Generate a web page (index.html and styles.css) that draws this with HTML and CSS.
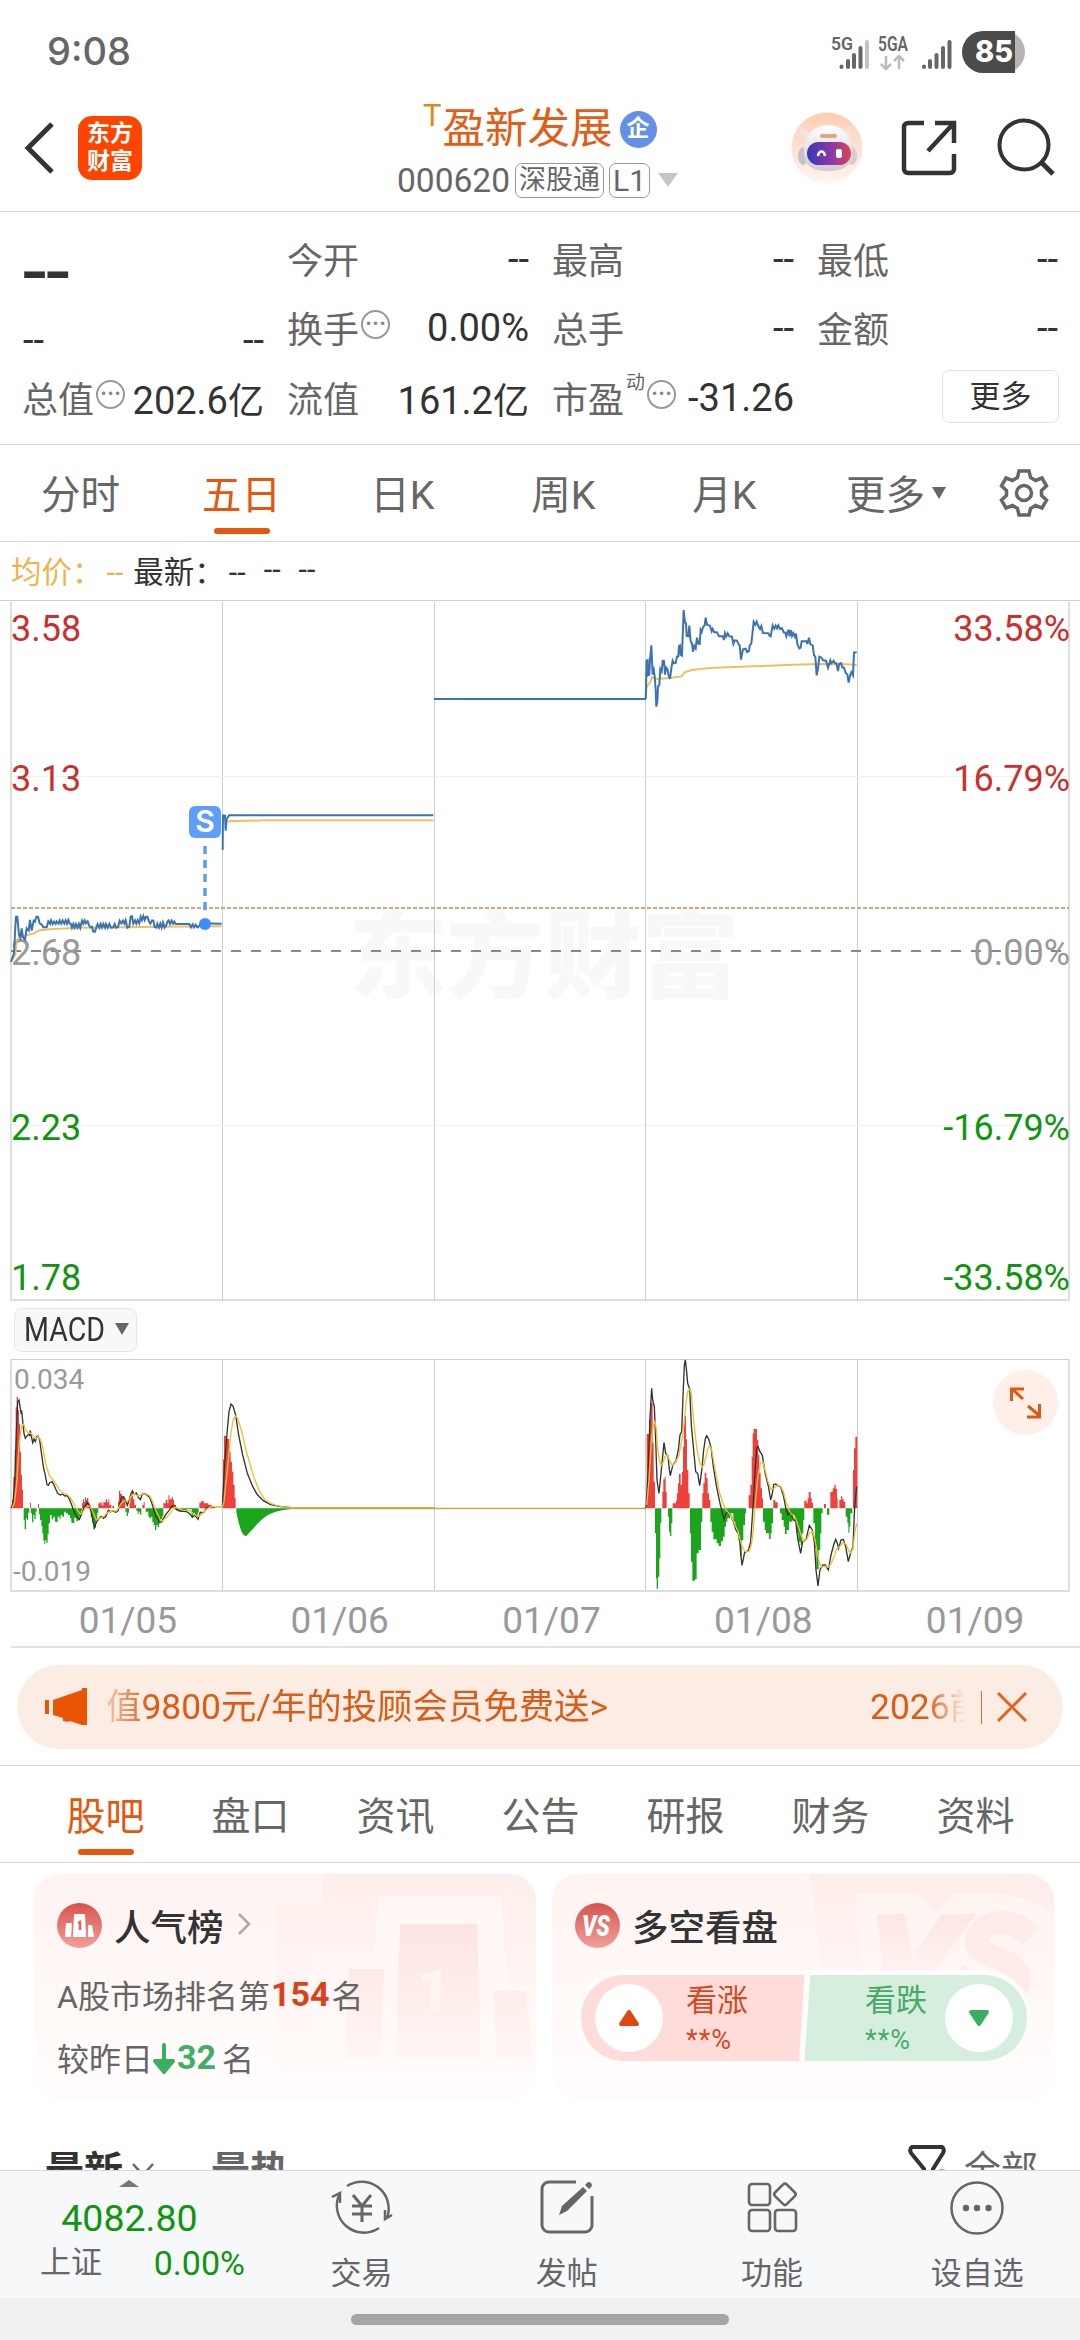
FILE: index.html
```html
<!DOCTYPE html>
<html lang="zh-CN">
<head>
  <meta charset="UTF-8">
  <meta name="viewport" content="width=device-width, initial-scale=1">
  <title>盈新发展 000620</title>
  <link rel="stylesheet" href="styles.css">
</head>
<body>
  <!-- Status bar -->
  <div class="status">
    <span class="clock">9:08</span>
    <svg class="signals" width="260" height="50" viewBox="0 0 260 50">
      <g fill="#666" font-family="Roboto" font-weight="600">
        <text x="0" y="20" font-size="18" textLength="22" lengthAdjust="spacingAndGlyphs">5G</text>
        <text x="47" y="21" font-size="20" textLength="30" lengthAdjust="spacingAndGlyphs">5GA</text>
      </g>
      <g stroke="#666" stroke-width="4" stroke-linecap="round">
        <path d="M10.500 37v-.5M17 37v-6M23 37V25M29.500 37V18"/>
        <path d="M36 37V12" stroke="#c4c4c4"/>
        <path d="M93 37v-.5M99 37v-6M105.500 37V25M112 37V18M118.500 37V12"/>
      </g>
      <path d="M55 26v13M50 34l5 5 5-5M68 39V26M63 31l5-5 5 5" fill="none" stroke="#bbb" stroke-width="2.500"/>
      <path d="M152 1h21a21 21 0 0 1 0 42h-21z" fill="#b5b5b5"/>
      <path d="M152 1h32v42h-32a21 21 0 0 1 0-42z" fill="#4b4b4b"/>
      <text x="144" y="32" font-family="Inter" font-size="30" font-weight="800" fill="#fff" textLength="38" lengthAdjust="spacingAndGlyphs">85</text>
    </svg>
  </div>

  <!-- Header -->
  <header class="header">
    <svg class="back" width="34" height="56" viewBox="0 0 34 56"><path d="M29 4L5 28l24 24" fill="none" stroke="#333" stroke-width="5"/></svg>
    <div class="logo"><span>东方</span><span>财富</span></div>
    <div class="title">
      <div class="name"><sup>T</sup>盈新发展<i class="badge">企</i></div>
      <div class="code">000620<b class="box">深股通</b><b class="box">L1</b><i class="tri light"></i></div>
    </div>
    <div class="actions">
      <svg width="72" height="72" viewBox="0 0 72 72">
        <defs>
          <linearGradient id="halo" x2="0" y2="1"><stop stop-color="#ffcdb2"/><stop offset="1" stop-color="#fff5f0"/></linearGradient>
          <linearGradient id="visor"><stop stop-color="#3a35b8"/><stop offset=".55" stop-color="#8a3aa5"/><stop offset="1" stop-color="#dd4458"/></linearGradient>
          <linearGradient id="shell" x2="0" y2="1"><stop stop-color="#fff"/><stop offset="1" stop-color="#cfcbd0"/></linearGradient>
        </defs>
        <circle cx="36" cy="36" r="35.500" fill="url(#halo)"/>
        <path d="M9 14c-1 9 4 14 10 14l5-8c-8 0-12-2-15-6zM60 14c1 9-3 14-8 14l-6-8c8 0 11-2 14-6z" fill="#f3e3e0"/>
        <ellipse cx="12" cy="44" rx="5" ry="9" fill="#c6c2c8"/><ellipse cx="61" cy="44" rx="5" ry="9" fill="#d2ced2"/>
        <path d="M13 40c0-15 9-27 24-27s24 12 24 27c0 14-8 19-24 19s-24-5-24-19z" fill="url(#shell)"/>
        <rect x="29" y="22" width="17" height="4" rx="2" fill="#dda978"/>
        <rect x="16" y="30" width="44" height="23" rx="11.500" fill="url(#visor)"/>
        <path d="M27 44c1-6 6-6 7 0" fill="none" stroke="#fff" stroke-width="2.500"/>
        <rect x="45" y="37" width="6" height="9" rx="2" fill="#fff"/>
      </svg>
      <svg class="share" width="60" height="60" viewBox="0 0 60 60"><path d="M24 5H8a4 4 0 0 0-4 4v42a4 4 0 0 0 4 4h42a4 4 0 0 0 4-4V36M35 5h19v20M53 6L28 33" fill="none" stroke="#333" stroke-width="4.500"/></svg>
      <svg width="60" height="60" viewBox="0 0 60 60"><g fill="none" stroke="#333" stroke-width="4"><circle cx="28" cy="27" r="24.500"/><path d="M45 44l12 12" stroke-width="5"/></g></svg>
    </div>
  </header>

  <!-- Quote figures -->
  <section class="quote">
    <div class="cell"><b class="price">--</b></div>
    <div class="cell"><span>今开</span><em>--</em></div>
    <div class="cell"><span>最高</span><em>--</em></div>
    <div class="cell"><span>最低</span><em>--</em></div>

    <div class="cell low"><em>--</em><em>--</em></div>
    <div class="cell"><span>换手<i class="info">•••</i></span><em>0.00%</em></div>
    <div class="cell"><span>总手</span><em>--</em></div>
    <div class="cell"><span>金额</span><em>--</em></div>

    <div class="cell"><span>总值<i class="info">•••</i></span><em>202.6<u>亿</u></em></div>
    <div class="cell"><span>流值</span><em>161.2<u>亿</u></em></div>
    <div class="cell"><span>市盈<sup>动</sup><i class="info">•••</i></span><em>-31.26</em></div>
    <div class="cell"><button class="more">更多</button></div>
  </section>

  <!-- Period tabs -->
  <nav class="periods">
    <span>分时</span><span class="on">五日</span><span>日K</span><span>周K</span><span>月K</span><span>更多<i class="tri"></i></span>
    <svg width="50" height="50" viewBox="0 0 50 50"><path d="M20 3h10l1.500 6.500 5 3 6.500-2.500 4.500 8-5 4.500v5l5 4.500-4.500 8-6.500-2.500-5 3L30 47H20l-1.500-6.500-5-3L7 40l-4.500-8 5-4.500v-5L2.500 18 7 10l6.500 2.500 5-3z" fill="none" stroke="#666" stroke-width="3.500"/><circle cx="25" cy="25" r="7.500" fill="none" stroke="#666" stroke-width="3.500"/></svg>
  </nav>

  <div class="legend"><span class="avg">均价：<i>--</i></span><span>最新：<i>--</i></span><span class="gap">--</span><span class="gap">--</span></div>

  <!-- Five day price chart -->
  <svg class="chart" width="1080" height="701" viewBox="0 0 1080 701">
    <text class="mark" x="349" y="390" textLength="390" lengthAdjust="spacingAndGlyphs">东方财富</text>
    <g class="grid">
      <path d="M0 .5H1080"/>
      <path class="thick" d="M11 2V700H1069V2M11 700H1069"/>
      <path d="M222.500 2V700M434.500 2V700M645.500 2V700M857.500 2V700"/>
      <path class="faint" d="M11 176.500H1069M11 525.500H1069"/>
    </g>
    <path d="M11 351H1069" stroke="#888" stroke-width="2" stroke-dasharray="10 10"/>
    <path d="M11 308H1069" stroke="#d0a58a" stroke-width="2" stroke-dasharray="4 2"/>
    <g class="axis">
      <text class="up" x="11" y="41">3.58</text><text class="up" x="11" y="191">3.13</text>
      <text class="flat" x="11" y="365">2.68</text>
      <text class="down" x="11" y="540">2.23</text><text class="down" x="11" y="690">1.78</text>
      <g text-anchor="end">
        <text class="up" x="1070" y="41">33.58%</text><text class="up" x="1070" y="191">16.79%</text>
        <text class="flat" x="1070" y="365">0.00%</text>
        <text class="down" x="1070" y="540">-16.79%</text><text class="down" x="1070" y="690">-33.58%</text>
      </g>
    </g>
    <g transform="translate(0 180) scale(.33333)" class="line">
      <path class="avgline" d="M36 540L46 525 50 480 60 472 82 465 100 461 118 451 160 447 240 443 380 442 480 440 665 439M684 124L800 121H1300"/>
      <path d="M33 546L42 520 46 440 48 410 52 410 57 465 61 473 65 445 69 472 75 478 80 445 86 452 90 420 95 452 101 422 105 425 109 410 114 410 119 430 126 435 130 442 140 442 145 424 150 431 153 421 158 432 162 425 167 432 170 424 176 431 179 421 184 431 188 421 193 431 197 421 201 431 205 420 209 431 213 432 216 443 220 432 224 443 228 432 233 443 237 432 241 443 246 422 250 431 254 421 258 430 263 424 268 438 272 442 276 440 280 455 285 455 289 442 293 432 298 443 302 432 306 443 310 432 315 443 318 432 323 443 328 432 333 443 340 442 344 432 348 443 354 441 359 422 364 430 369 422 373 431 377 421 382 443 388 440 392 410 396 409 400 431 405 421 409 431 413 420 418 430 422 410 426 420 430 408 434 420 438 410 442 410 446 422 451 431 456 421 460 422 464 441 469 443 472 431 477 443 481 431 485 443 489 427 494 443 498 438 502 425 506 421 510 432 515 422 519 431 523 425 527 432 568 432 573 442 578 433 582 442 587 434 592 442 598 438 602 430 665 431M668 210L669 106 675 107 677 152 680 118 687 106H1300"/>
    </g>
    <path class="blue" d="M434 99H646"/>
    <g transform="translate(620 -10) scale(.33333)" class="line">
      <path class="avgline" d="M78 325L79 295 84 284 91 277 95 262 110 267 150 264 185 259 195 246 215 240 270 234 400 229 520 224 600 222 680 223 710 225"/>
      <path d="M77 327L80 212 83 210 84 256 88 254 90 210 94 166 98 254 100 230 104 258 107 300 109 350 112 335 114 290 118 285 121 237 125 244 128 212 132 213 135 254 138 232 142 236 146 257 150 267 154 235 158 212 162 220 167 219 171 200 175 199 177 168 180 166 182 194 186 197 191 60 195 98 198 100 200 138 205 139 208 107 212 154 216 160 219 185 223 168 227 175 231 143 235 161 239 162 242 120 245 126 249 112 254 106 257 83 261 104 270 107 275 124 278 117 283 127 291 127 297 139 308 139 312 150 315 129 319 139 323 130 328 139 336 140 340 162 344 151 351 152 355 162 359 166 363 209 369 178 377 176 381 186 387 183 389 167 394 160 398 125 401 95 406 104 410 95 414 106 420 117 424 108 429 129 445 130 449 138 452 139 458 106 463 116 467 107 471 115 475 106 480 117 486 115 491 127 496 128 499 139 505 119 509 139 512 120 516 138 520 129 525 140 528 131 532 162 538 175 542 173 545 154 560 154 562 162 567 143 571 163 578 166 582 196 586 200 590 256 594 236 598 200 605 203 609 211 618 212 624 233 631 211 634 220 641 212 645 220 649 220 654 243 658 221 663 219 667 232 672 233 677 249 682 253 686 278 690 257 694 247 699 256 702 188 710 187"/>
    </g>
    <g>
      <path d="M205 246V310" stroke="#5e9cf0" stroke-width="3.500" stroke-dasharray="8 6"/>
      <circle cx="205" cy="324" r="6" fill="#3f8cff"/>
      <rect x="189" y="206" width="32" height="32" rx="6" fill="#5f9ef8"/>
      <text x="205" y="232" text-anchor="middle" font-family="Inter" font-size="30" font-weight="600" fill="#fff">S</text>
    </g>
  </svg>

  <!-- MACD -->
  <div class="indicator"><button><span>MACD</span><i class="tri"></i></button></div>
  <div class="macd">
    <svg width="1080" height="233" viewBox="0 0 1080 233">
      <g class="grid">
        <path d="M11 .5H1069"/>
        <path class="thick" d="M11 0V232H1069V0"/>
        <path d="M222.500 0V232M434.500 0V232M645.500 0V232M857.500 0V232"/>
      </g>
      <g class="small"><text x="14" y="30">0.034</text><text x="13" y="222">-0.019</text></g>
      <g transform="translate(0 -69) scale(.33333)">
        <path class="red" d="M36 655V630H40V560H44V480H47V352H50V321H54V360H57V402H60V485H63V555H66V600H69V655zM90 655V638H93V655zM114 655V642H117V655zM246 655V640H249V628H252V636H255V622H258V630H261V624H265V640H269V645H272V655zM295 655V640H302V635H305V646H310V637H317V628H321V637H325V628H328V645H334V655zM337 655V648H342V655zM354 655V635H357V602H361V612H366V618H372V632H376V655zM388 655V640H391V622H395V600H399V628H403V645H408V655zM427 655V645H431V636H434V655zM490 655V640H497V630H502V640H505V616H508V628H515V622H519V630H522V645H528V655zM598 655V638H603V634H612V640H625V644H635V650H645V655zM669 655V508H672V437H679V447H687V485H692V515H696V545H700V585H704V625H707V655z"/>
        <path class="green" d="M71 655V690H74V718H78V685H81V690H84V668H88V655zM93 655V670H96V697H100V675H103V688H107V665H110V655zM117 655V672H120V690H124V708H127V730H130V752H133V762H136V750H139V758H143V732H146V700H150V675H155V688H160V680H165V695H171V696H173V680H179V688H182V675H187V680H192V665H197V670H204V675H210V685H214V698H220V700H223V683H229V694H234V688H239V678H243V662H246V655zM272 655V682H276V698H280V718H285V712H288V690H292V668H295V655zM376 655V665H380V678H384V668H387V655zM409 655V662H413V672H416V665H420V674H424V655zM437 655V665H445V680H449V685H453V680H457V697H461V705H465V720H469V705H473V712H477V692H482V688H487V678H490V655zM526 655V660H540V664H560V658H575V678H580V670H585V676H589V680H593V668H596V655zM709 655V666L716 698 724 724 731 736 739 738 750 726 762 713 775 698 790 685 805 674 825 666 850 660 890 655z"/>
        <path class="dif" d="M33 655L39 640 45 560 49 430 53 335 57 330 60 350 63 367 65 362 69 402 72 430 76 445 82 437 86 432 89 436 91 422 94 438 98 458 102 447 106 455 110 440 114 438 119 449 123 480 130 530 136 557 141 584 145 586 149 578 156 575 161 583 166 595 173 610 181 615 187 612 195 618 202 617 209 629 215 645 222 664 231 682 238 689 245 672 252 653 259 642 263 637 269 651 274 666 279 692 284 714 289 696 296 687 303 679 310 685 318 679 325 661 331 665 339 663 347 667 354 663 358 645 365 621 371 620 377 633 382 646 387 632 393 611 397 603 403 612 409 609 415 622 421 629 427 612 436 611 443 617 449 622 455 638 461 658 468 681 473 681 478 698 485 696 492 683 499 671 507 662 514 650 523 646 530 659 539 663 560 665 571 673 577 682 585 676 594 688 601 667 611 668 619 654 632 650 667 650 674 520 682 420 687 365 693 342 699 348 707 375 716 435 728 495 742 550 757 587 771 613 790 632 812 644 842 650 885 654H1303"/>
        <path class="dea" d="M36 653L43 640 50 580 57 470 61 430 67 405 71 402 76 418 86 430 93 429 99 437 106 446 114 440 121 448 128 470 134 505 141 535 149 558 159 570 168 583 178 598 188 609 200 613 211 622 222 643 233 661 241 673 248 668 256 653 265 648 272 651 280 669 289 690 297 686 309 681 322 668 340 662 350 663 361 644 372 632 383 634 394 618 403 611 413 618 425 613 438 612 449 617 456 631 464 652 470 667 480 688 487 693 500 682 512 668 523 651 535 655 550 661 569 662 582 672 594 680 606 672 618 659 632 650 667 650 672 635 684 520 692 435 700 388 707 378 713 384 724 420 738 480 751 526 765 571 778 602 792 626 808 638 830 647 860 652 900 654H1303"/>
      </g>
      <path class="dea zero" d="M290 149.500H646"/>
      <g transform="translate(620 -19) scale(.33333)">
        <path class="red" d="M80 505V282H87V240H91V185H94V190H98V310H101V425H105V505zM127 505V455H130V418H134V410H137V455H140V505zM158 505V490H168V482H171V460H174V430H177V402H182V435H186V395H189V320H192V228H198V298H201V390H205V460H209V505zM247 505V460H250V430H254V398H259V415H263V460H267V480H271V505zM386 505V465H391V435H395V350H398V280H401V267H411V300H415V345H418V398H422V445H426V475H429V505zM460 505V480H466V487H473V505zM553 505V482H560V490H563V475H566V456H572V475H575V488H579V505zM612 505V492H618V505zM631 505V456H638V445H643V434H647V446H651V475H653V505zM658 505V480H663V469H667V478H671V485H676V505zM699 505V390H702V325H706V290H712V505z"/>
        <path class="green" d="M105 505V580H108V715H110V746H114V710H118V655H121V548H124V505zM144 505V530H147V575H150V588H154V550H157V505zM210 505V580H213V665H217V722H225V717H230V640H236V630H243V545H247V505zM271 505V545H275V575H280V598H290V610H296V618H303V604H309V590H314V560H318V545H322V535H330V520H340V545H346V570H350V575H355V602H360V648H365V600H370V555H375V520H378V505zM429 505V545H434V570H438V580H447V597H452V580H455V550H459V505zM480 505V520H485V540H491V560H495V582H500V570H507V545H517V525H523V545H530V580H535V605H542V615H546V580H550V540H553V505zM580 505V550H585V625H589V688H596V630H601V580H604V520H608V505zM621 505V524H628V505zM677 505V530H682V550H685V578H688V560H691V520H697V505z"/>
        <path class="dif" d="M78 505L84 400 90 235 95 145 98 180 103 200 107 300 111 420 117 460 121 420 127 360 132 308 137 340 144 348 148 388 151 407 158 377 168 362 175 330 180 285 185 275 189 170 193 75 196 60 199 85 203 130 209 147 214 255 220 320 227 395 233 400 239 437 246 385 251 330 256 296 260 287 266 297 273 322 280 380 290 442 300 490 306 515 312 538 318 520 325 515 332 525 340 545 348 570 358 585 362 640 366 676 374 637 385 632 392 605 399 500 405 395 410 325 414 320 420 335 427 346 435 398 445 438 452 480 457 460 461 434 467 432 475 438 482 441 491 470 498 508 504 525 512 515 520 540 527 542 533 595 542 640 548 605 558 599 568 556 577 570 583 605 588 690 594 738 600 689 608 675 615 674 625 690 633 645 641 615 647 598 652 610 656 625 663 600 670 598 677 620 685 665 692 638 699 620 704 500 710 440"/>
        <path class="dea" d="M80 495L87 420 94 300 100 255 104 245 108 260 113 325 118 360 123 377 128 370 135 350 142 344 149 362 157 376 165 370 175 350 182 320 188 285 194 235 199 180 204 152 209 147 214 160 218 210 225 280 232 335 240 370 246 382 253 372 259 345 265 322 270 319 275 330 282 370 291 420 299 460 308 487 318 510 328 520 336 534 345 555 355 577 362 605 369 627 376 635 387 634 394 615 400 570 406 490 413 415 421 370 428 365 435 390 444 425 453 448 462 445 472 436 482 439 490 455 498 486 505 505 514 522 523 527 533 552 543 585 552 605 560 598 570 578 578 574 585 600 592 640 599 670 605 681 614 679 624 682 633 672 642 650 651 626 661 617 670 607 679 614 687 635 693 639 699 625 704 580 710 550"/>
      </g>
      <circle cx="1025.500" cy="43.500" r="32.500" fill="#fef0e9"/>
      <path d="M1023 40L1012 30M1011.500 42V30H1024M1028 47L1040 57M1027 58H1039.500V45" fill="none" stroke="#e0570f" stroke-width="3"/>
    </svg>
  </div>
  <div class="dates"><span>01/05</span><span>01/06</span><span>01/07</span><span>01/08</span><span>01/09</span></div>

  <!-- Promo ticker -->
  <div class="promo">
    <div class="pill">
      <svg width="46" height="40" viewBox="0 0 46 40"><path d="M1 13h4v14H1zM9 13L38 3V1h5v37h-5l-12-4-2 1-5-1v-3L9 28z" fill="#ea5504"/></svg>
      <div class="ticker"><span>值9800元/年的投顾会员免费送&gt;</span><span class="next">2026前</span></div>
      <svg class="close" width="50" height="40" viewBox="0 0 50 40"><path d="M3.500 4V37" stroke="#e0702f"/><path d="M20 6L48 34M48 6L20 34" stroke="#e4601c" stroke-width="3"/></svg>
    </div>
  </div>

  <nav class="sections">
    <span class="on">股吧</span><span>盘口</span><span>资讯</span><span>公告</span><span>研报</span><span>财务</span><span>资料</span>
  </nav>

  <main class="feed">
    <div class="cards">
      <div class="card">
        <svg class="art" width="502" height="226" viewBox="0 0 502 226">
          <defs><linearGradient id="fade" x2="0" y2="1"><stop stop-color="#fbdcd8" stop-opacity=".7"/><stop offset="1" stop-color="#fbdcd8" stop-opacity=".1"/></linearGradient></defs>
          <path d="M243 31H289V0H502V200H243z" fill="url(#fade)" opacity=".35"/>
          <path d="M278 78H340L344 22H467L474 112H502V185H278z" fill="#fff9f7" opacity=".8"/>
          <path d="M315 95H350L346 184H311zM366 50H443L447 184H362zM460 117H492L498 184H462z" fill="url(#fade)"/>
          <text x="382" y="137" class="rank" font-size="60">1</text>
        </svg>
        <h3>
          <svg width="45" height="45" viewBox="0 0 45 45"><defs><linearGradient id="disc" x2="0" y2="1"><stop stop-color="#d9534d"/><stop offset="1" stop-color="#f1a09a"/></linearGradient></defs><circle cx="22.500" cy="22.500" r="22.500" fill="url(#disc)"/><path d="M9 20h6l-1 14H8zM17 11h11l1 23H16zM31 22h4l2 12h-6z" fill="#fff"/><path d="M21 20l2-1v8" fill="none" stroke="#db6660" stroke-width="2.500"/></svg>
          <span>人气榜</span>
          <svg class="go" width="14" height="24" viewBox="0 0 14 24"><path d="M2 2l10 10L2 22" fill="none" stroke="#aaa" stroke-width="2.500"/></svg>
        </h3>
        <p>A股市场排名第<b class="hot">154</b>名</p>
        <p>较昨日<svg width="24" height="32" viewBox="0 0 24 32"><path d="M12 2v18M3 18h18l-9 11z" fill="#3cae62" stroke="#3cae62" stroke-width="4" stroke-linejoin="round" stroke-linecap="round"/></svg><b class="cool">32</b><span>名</span></p>
      </div>
      <div class="card">
        <svg class="art" width="502" height="226" viewBox="0 0 502 226">
          <path d="M258 0H502V130H274z" fill="url(#fade)" opacity=".4"/>
          <path d="M303 20H365L385 38 400 20H440Q480 20 502 42V110H310z" fill="#fff9f7" opacity=".6"/>
          <path d="M325 40H353L360 85 390 40H424L373 110H332z" fill="url(#fade)" opacity=".8"/>
          <path d="M479 62C462 46 441 44 429 57C415 75 436 80 450 86C474 96 470 112 454 125M411 110L420 98" fill="none" stroke="#fbe5e2" stroke-width="23" opacity=".6"/>
        </svg>
        <h3>
          <svg width="45" height="45" viewBox="0 0 45 45"><circle cx="22.500" cy="22.500" r="22.500" fill="url(#disc)"/><text x="21" y="33" text-anchor="middle" font-family="Roboto" font-style="italic" font-weight="900" font-size="29" textLength="28" lengthAdjust="spacingAndGlyphs" fill="#fff">VS</text></svg>
          <span>多空看盘</span>
        </h3>
        <div class="vote">
          <div class="bull"><i class="knob"><svg width="22" height="18" viewBox="0 0 22 18"><path d="M11 3L19 15H3z" fill="#e2460f" stroke="#e2460f" stroke-width="4" stroke-linejoin="round"/></svg></i><span>看涨<small>**%</small></span></div>
          <div class="bear"><span>看跌<small>**%</small></span><i class="knob"><svg width="22" height="18" viewBox="0 0 22 18"><path d="M11 15L19 3H3z" fill="#3cae62" stroke="#3cae62" stroke-width="4" stroke-linejoin="round"/></svg></i></div>
        </div>
      </div>
    </div>
    <div class="sort">
      <b>最新</b>
      <svg class="chev" width="24" height="16" viewBox="0 0 24 16"><path d="M2 2l10 11L22 2" fill="none" stroke="#666" stroke-width="2.500"/></svg>
      <b class="dim">最热</b>
      <svg class="funnel" width="40" height="42" viewBox="0 0 40 42"><path d="M4 3h30q3 2 1 6L25 25v14l-9-6v-8L3 9Q1 5 4 3z" fill="none" stroke="#333" stroke-width="4"/><circle cx="34" cy="31" r="6" fill="#ee7a3a"/></svg>
      <span>全部</span>
    </div>
  </main>

  <!-- Bottom bar -->
  <footer class="bottom">
    <div class="index"><i class="caret"></i><strong>4082.80</strong><p><span>上证</span><em>0.00%</em></p></div>
    <div class="item">
      <svg width="64" height="60" viewBox="0 0 64 60"><g fill="none" stroke="#666" stroke-width="2.500"><path d="M17 9A27 27 0 0 1 57 41M49 51A27 27 0 0 1 10 16"/><path d="M2 20l8-4 0 10M62 38l-7 4 0-9"/><path d="M23 18l9 11 9-11M22 29h20M22 37h20M32 29v16" stroke-width="3"/></g></svg>
      <span>交易</span>
    </div>
    <div class="item">
      <svg width="64" height="60" viewBox="0 0 64 60"><path d="M41 5H14a7 7 0 0 0-7 7v36a7 7 0 0 0 7 7h36a7 7 0 0 0 7-7V19" fill="none" stroke="#666" stroke-width="3"/><path d="M24 38l3-9 21-19 4 4-20 20zM50 8l3-3q4 0 4 4l-3 3z" fill="#666"/></svg>
      <span>发帖</span>
    </div>
    <div class="item">
      <svg width="64" height="60" viewBox="0 0 64 60"><g fill="none" stroke="#666" stroke-width="2.600"><rect x="9" y="7" width="21" height="21" rx="3"/><rect x="9" y="33" width="21" height="21" rx="3"/><rect x="35" y="33" width="21" height="21" rx="3"/><rect x="36.500" y="9" width="16.500" height="16.500" rx="2.500" transform="rotate(45 44.800 17.500)"/></g></svg>
      <span>功能</span>
    </div>
    <div class="item">
      <svg width="64" height="60" viewBox="0 0 64 60"><circle cx="32" cy="31" r="25.500" fill="none" stroke="#666" stroke-width="2.500"/><g fill="#666"><circle cx="21" cy="31" r="3.200"/><circle cx="32" cy="31" r="3.200"/><circle cx="43.500" cy="31" r="3.200"/></g></svg>
      <span>设自选</span>
    </div>
  </footer>
  <div class="gesture"><i></i></div>
</body>
</html>
```
FILE: styles.css
```css
:root {
  --orange: #e4570c;
  --text: #333;
  --grey: #666;
  --line: #d8d8d8;
  --red: #c9302e;
  --green: #0f960f;
  --font-stack: Roboto, "Noto Sans CJK SC", sans-serif;
}
* {box-sizing: border-box; margin: 0; padding: 0;}
i, em {font-style: normal;}
svg {display: block; flex: none;}
body {
  width: 1080px;
  height: 2340px;
  overflow: hidden;
  display: flex;
  flex-direction: column;
  background: #fff;
  color: var(--text);
  font-family: var(--font-stack);
}
body > * {flex: none;}
button {font-family: inherit; color: inherit; background: none;}

/* Small triangles */
.tri {
  display: inline-block;
  border: 7px solid transparent;
  border-top: 12px solid var(--grey);
  border-bottom: 0;
}
.tri.light {border-width: 14px 10.5px 0; border-top-color: #c6c6c6; margin-left: 8px;}

/* Status bar */
.status {height: 90px; display: flex; justify-content: space-between; padding: 30px 0 0 47px;}
.clock {font: 500 38px/42px Inter, sans-serif; color: var(--grey);}
.signals {margin-right: -11px;}

/* Header */
.header {
  height: 122px;
  border-bottom: 1px solid var(--line);
  display: flex;
  align-items: flex-start;
}
.back {margin: 30px 0 0 23px;}
.logo {
  width: 64px; height: 64px; margin: 26px 0 0 21px;
  border-radius: 14px; background: #ff4400; color: #fff;
  display: flex; flex-direction: column; align-items: center; justify-content: center;
  font-size: 23px; line-height: 28px; font-weight: 700;
}
.title {width: 300px; margin: 10px 0 0 255px;}
.name {
  display: flex; align-items: center; height: 58px; margin-left: 26px;
  font-size: 42.5px; line-height: 60px; color: #e35d15;
}
.name sup {font-size: 31px; line-height: 31px; margin: -28px 1px 0 0; color: #e08a1e;}
.badge {
  width: 37px; height: 37px; margin-left: 7px; border-radius: 50%;
  background: #6590e8; color: #fff; font-size: 23px; line-height: 35px;
  font-weight: 700; text-align: center;
}
.code {display: flex; align-items: center; height: 44px; font-size: 33.5px; color: var(--grey);}
.box {
  height: 35px; margin-left: 5px; padding: 0 3px; border: 1.5px solid #999;
  border-radius: 7px; font-size: 27px; line-height: 33px; font-weight: 400;
}
.box + .box {font-size: 30px; padding: 0 3px; margin-left: 5px;}
.actions {display: flex; align-items: center; gap: 37px; margin: 22px 0 0 94px;}
.actions .share {margin-right: -1px;}

/* Quote figures */
.quote {
  height: 233px;
  border-bottom: 1px solid var(--line);
  padding: 11px 22px 0 23px;
  display: grid;
  grid-template-columns: 241px 241px 241px 240px;
  grid-template-rows: repeat(3, 69.5px);
  column-gap: 24px;
  font-size: 36px;
}
.cell {display: flex; align-items: center; justify-content: space-between; white-space: nowrap;}
.cell span {color: var(--grey); display: flex; align-items: center; margin-left: -1px;}
.cell em {font-size: 38px; padding-top: 2px;}
.cell u {font-size: 36px; text-decoration: none;}
.cell sup {font-size: 19px; margin: -32px 0 0 2px;}
.price {font-size: 60px; line-height: 60px; letter-spacing: -5px; transform: scaleX(1.25); transform-origin: left; margin: 31px 0 0 -3px;}
.low {padding-top: 24px;}
.info {
  width: 29px; height: 29px; margin: -5px 0 0 2px; border: 2px solid #999; border-radius: 50%;
  color: #888; font: 12px/24px "DejaVu Sans", sans-serif; text-align: center;
}
.more {width: 117px; height: 53px; margin: 0 -1px 0 auto; border: 1.5px solid #e2e2e2; border-radius: 7px; font-size: 31px; line-height: 44px;}

/* Tabs */
.periods, .sections {height: 97px; border-bottom: 1px solid var(--line); display: flex; align-items: center; font-size: 39.5px; color: var(--grey);}
.periods span, .sections span {width: 161px; height: 96px; line-height: 102px; text-align: center; position: relative; white-space: nowrap;}
.periods svg {margin: 0 0 0 33px;}
.periods .tri {position: absolute; left: 127px; top: 42px;}
.on {color: var(--orange);}
.on::after {
  content: ""; position: absolute; left: 50%; bottom: 7px; margin-left: -28px;
  width: 56px; height: 6px; border-radius: 3px; background: var(--orange);
}
.sections {padding-left: 33px; font-size: 39px;}
.sections span {width: 145px; line-height: 102px;}

/* Charts */
.legend {height: 58px; display: flex; align-items: center; padding: 0 0 3px 11px; font-size: 30.5px; gap: 10px;}
.legend i {margin-left: 4px;}
.legend .gap {margin-left: 8px;}
.avg {color: #ecb550;}
.grid {fill: none; stroke: #cfcfcf; stroke-width: 1;}
.grid .thick {stroke: #dedede; stroke-width: 2;}
.grid .faint {stroke: #f1f1f1;}
.axis {font-size: 36px;}
.up {fill: var(--red);}
.down {fill: var(--green);}
.flat {fill: #999;}
.mark {font: 900 96px "Noto Sans CJK SC", sans-serif; fill: #f8f8f8;}
.line path, .blue {fill: none; stroke: #3b74b0; stroke-width: 6;}
.blue {stroke-width: 2;}
.line .avgline {stroke: #f0bf60;}
.indicator {height: 58px; padding: 7px 0 0 14px;}
.indicator button {
  width: 123px; height: 44px; border: 1px solid #e3e5ea; border-radius: 8px; background: #f7f8fa;
  display: flex; align-items: center; padding: 0 0 2px 9px; font-size: 34px;
}
.indicator span {width: 91px; transform: scaleX(.84); transform-origin: left;}
.small {font-size: 28px; fill: #999;}
.macd .red {fill: #f0403c;}
.macd .green {fill: #1ba51b;}
.macd .dea {fill: none; stroke: #edc030; stroke-width: 4;}
.macd .zero {stroke: #c2a849; stroke-width: 1.5;}
.macd .dif {fill: none; stroke: #333; stroke-width: 4;}
.dates {
  height: 56px; margin-left: 11px; padding-left: 11px; border-bottom: 2px solid #e3e3e3; display: flex;
  font-size: 37px; line-height: 57px; color: #999;
}
.dates span {width: 211.8px; flex: none; text-align: center;}

/* Promo ticker */
.promo {height: 118px; border-bottom: 1px solid var(--line); padding: 17px 17px 0;}
.pill {height: 84px; border-radius: 42px; background: #fcede4; display: flex; align-items: center; padding-left: 27px; color: #dc5b17;}
.ticker {
  width: 868px; margin-left: 16px; display: flex; justify-content: space-between; white-space: nowrap; overflow: hidden;
  font-size: 35.4px; line-height: 52px;
  -webkit-mask-image: linear-gradient(to right, rgba(0, 0, 0, .25), #000 5%, #000 94.5%, transparent 99%);
}
.next {width: 104px;}
.close {margin-left: 4px;}

/* Cards */
.feed {height: 307px; overflow: hidden;}
.cards {display: flex; gap: 16px; padding: 11px 26px 0 34px;}
.card {
  width: 502px; height: 226px; border-radius: 26px; overflow: hidden; position: relative;
  background: linear-gradient(#fff4f2, #fffdfc); padding: 28px 23px; flex: none;
}
.card > * {position: relative;}
.card .art {position: absolute; left: 0; top: 0;}
.rank {font-family: Roboto, sans-serif; font-weight: 900; fill: #fff6f4;}
.card h3 {height: 46px; display: flex; align-items: center; gap: 12px; font-size: 36.5px; line-height: 48px; font-weight: 500;}
.card h3 span {margin-top: 7px;}
.card .go {margin: -3px 0 0 1px;}
.card p {display: flex; align-items: center; height: 63px; font-size: 32px; color: var(--grey);}
.card h3 + p {margin-top: 14px;}
.card p b {font-size: 34px; font-weight: 700; margin: 0 2px 0 1px;}
.card p svg {margin: 5px 0 0 -1px;}
.card p span {margin-left: 4px;}
.hot {color: #d9431b;}
.cool {color: #3fae66;}
.vote {
  width: 456px; height: 96px; margin: 22px 0 0 1px; border: 5px solid #fffdfc; border-radius: 48px;
  background: #fffdfc; overflow: hidden; display: flex; font-size: 31px; line-height: 36px;
}
.vote div {width: 226px; display: flex; align-items: center;}
.vote span {display: flex; flex-direction: column; padding-top: 4px;}
.vote small {font-size: 27px; line-height: 36px; letter-spacing: 1px; margin-top: 3px;}
.bull {background: #fddcd9; color: #d4491f; clip-path: polygon(0 0, 100% 0, 97.5% 100%, 0 100%);}
.bear {background: #d6eedd; color: #4aa96a; margin-left: -1px; clip-path: polygon(3% 0, 100% 0, 100% 100%, .5% 100%); justify-content: flex-end;}
.knob {width: 68px; height: 68px; border-radius: 50%; background: #fff; display: flex; align-items: center; justify-content: center; margin: 0 23px 0 14px;}
.bear .knob {margin: 0 14px 0 18px;}
.sort {display: flex; align-items: flex-start; margin-top: 38px; padding-left: 45px; font-size: 39px; line-height: 56px;}
.sort b {font-weight: 700; margin-top: 5px;}
.sort .dim {margin-left: 56px; color: var(--grey);}
.chev {margin: 24px 0 0 8px;}
.funnel {margin: 6px 16px 0 619px;}
.sort span {color: var(--grey); font-size: 37px; margin-top: 5px;}

/* Bottom bar */
.bottom {height: 128px; border-top: 1px solid var(--line); background: #f7f8fa; display: flex; color: var(--grey);}
.index {width: 259px; display: flex; flex-direction: column; align-items: center;}
.caret {border: 10px solid transparent; border-top: 0; border-bottom: 7px solid #777; margin-top: 9px;}
.index strong {font-size: 37.5px; line-height: 44px; font-weight: 400; color: var(--green); margin-top: 9px;}
.index p {width: 205px; margin-left: 26px; display: flex; justify-content: space-between; align-items: center; font-size: 31px; line-height: 44px; margin-top: 1px;}
.index em {font-size: 34px; color: var(--green);}
.item {width: 205.400px; display: flex; flex-direction: column; align-items: center; padding-top: 6px; font-size: 31px; line-height: 44px;}
.item span {margin-top: 15px;}
.gesture {height: 42px; background: #f0f0f2; padding-top: 16px;}
.gesture i {display: block; width: 378px; height: 11px; margin: 0 auto; border-radius: 6px; background: #a5a5a7;}
```
